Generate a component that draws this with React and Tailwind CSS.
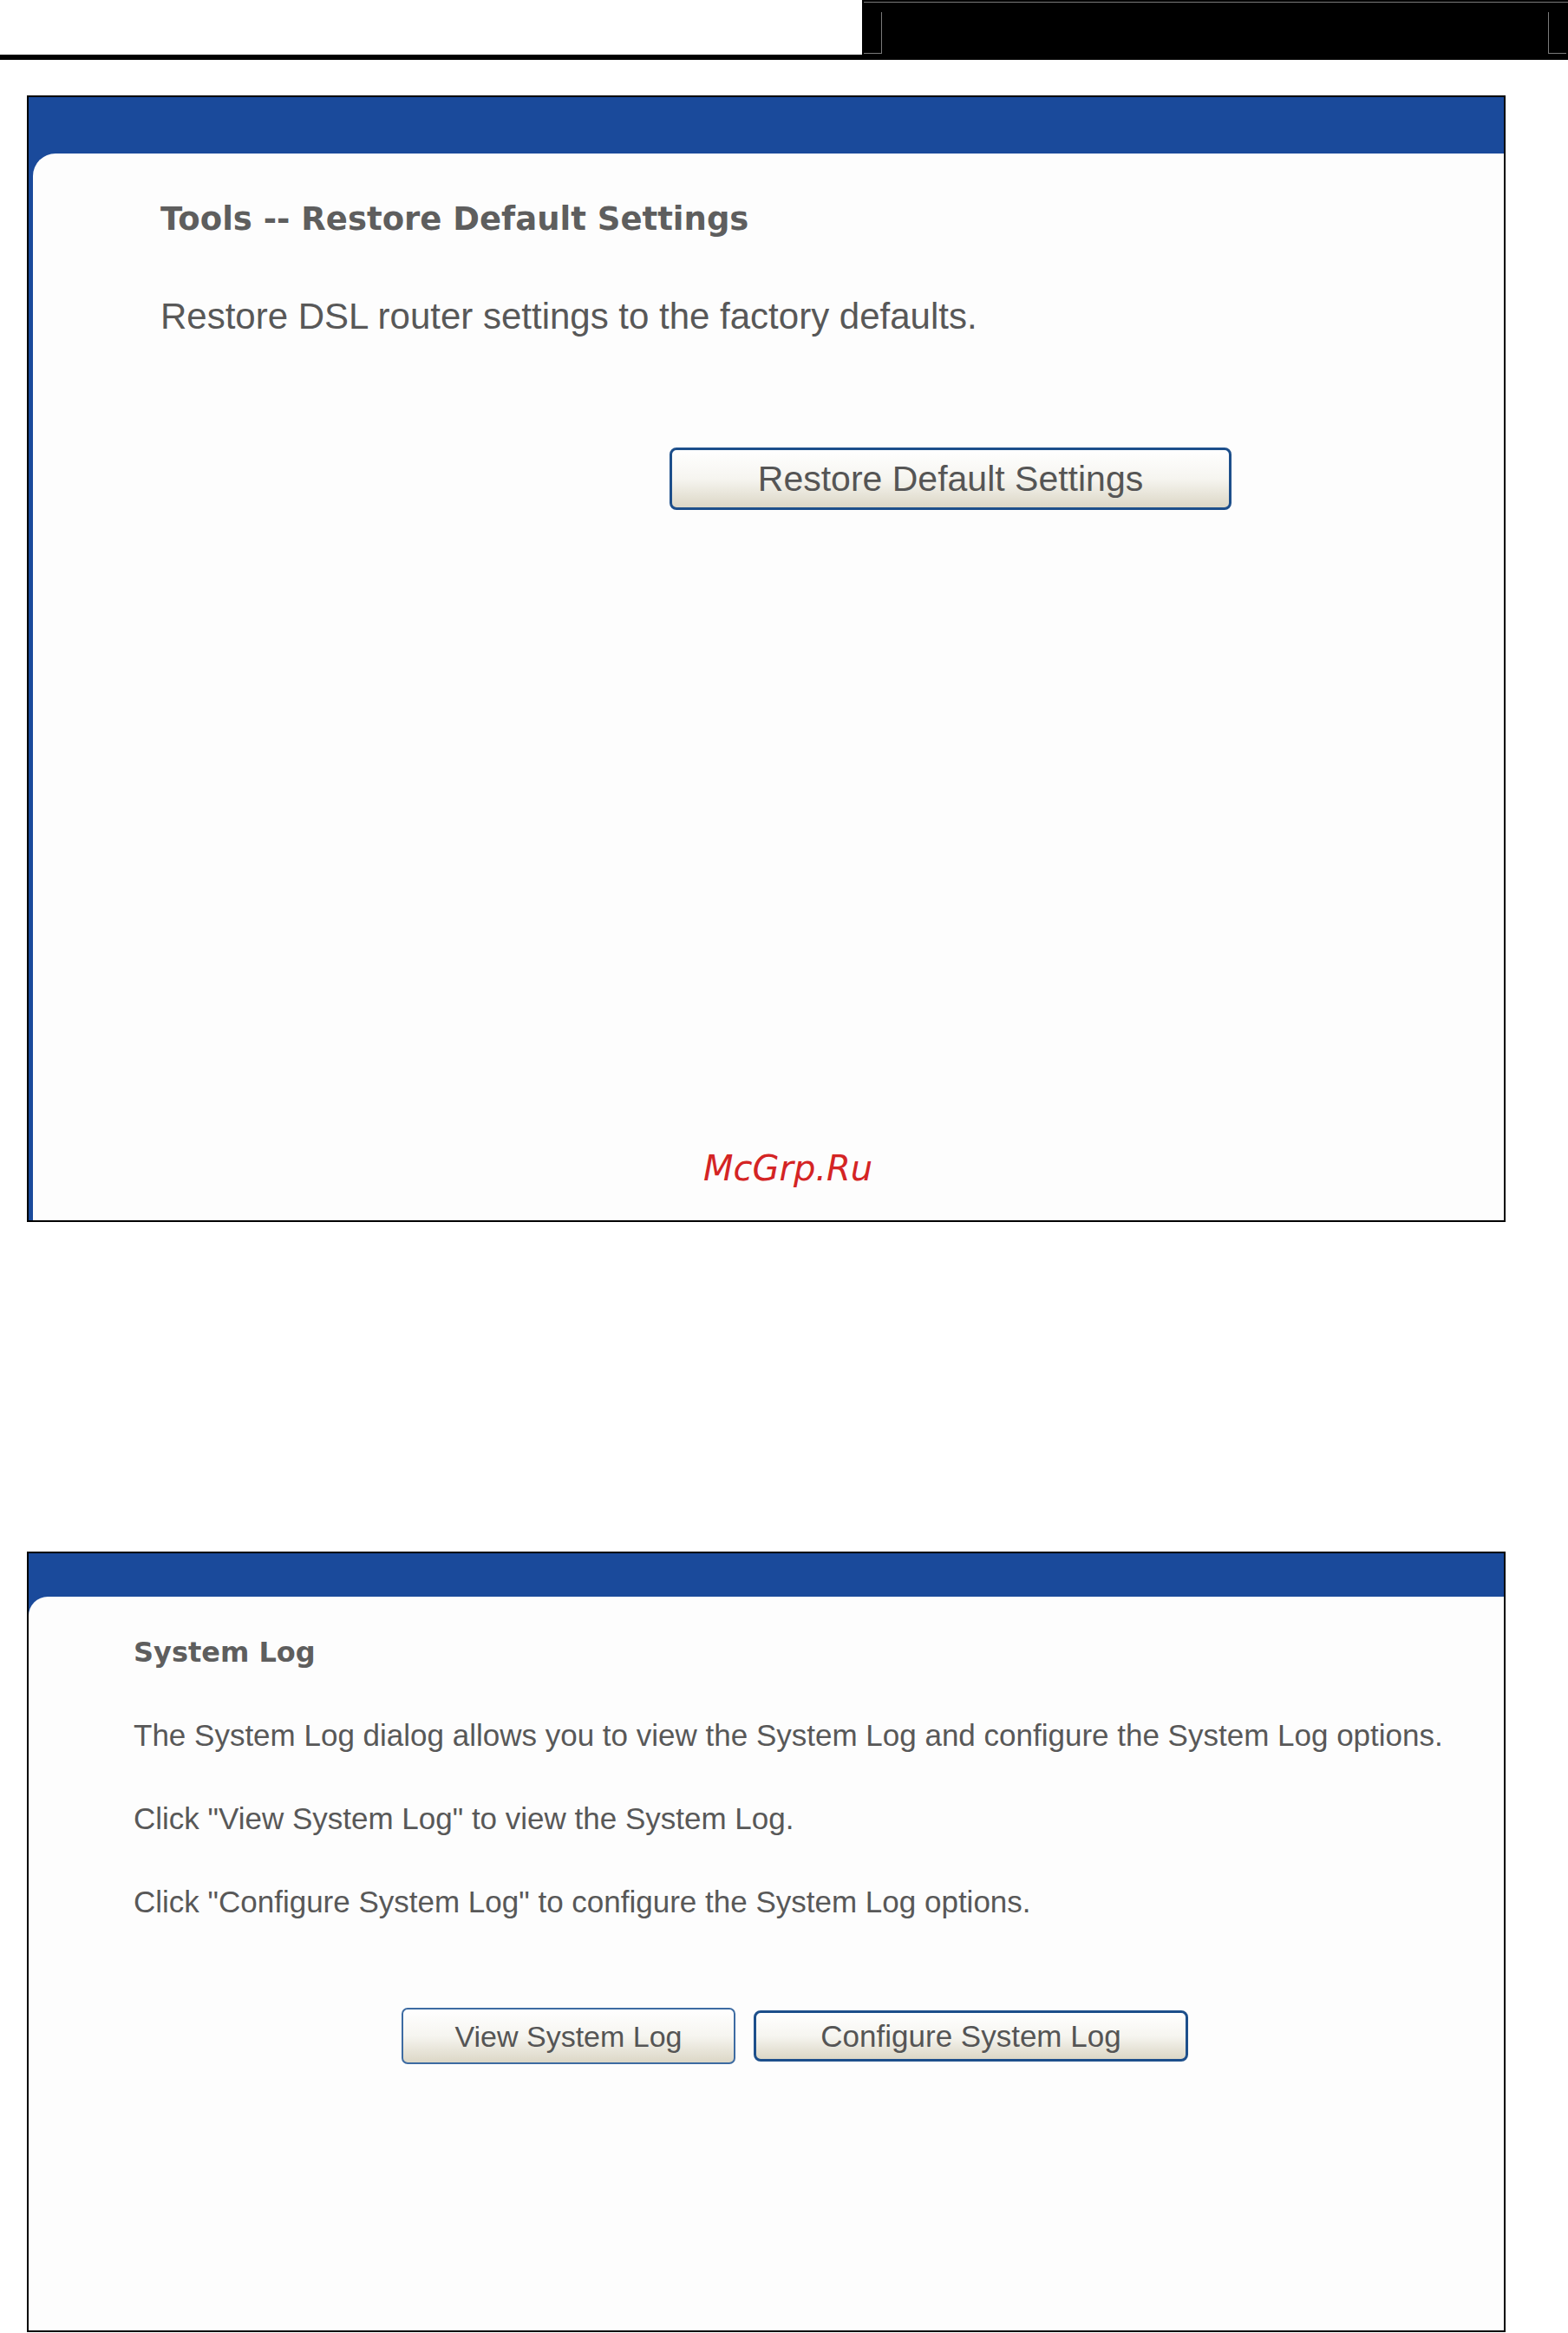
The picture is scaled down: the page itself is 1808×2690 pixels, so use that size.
// Router admin pages: Restore Default Settings and System Log panels
const BLUE = 'bg-[#1a4a9b]'

function PageHeader() {
  return (
    <header>
      <div className="flex h-[63px]">
        <div className="w-[994px] bg-white" />
        <div className="flex-1 bg-black pt-[2px]">
          <div className="h-px ml-[2px] bg-[#7a7a7a]" />
          <div className="flex justify-between mt-[11px] px-[2px]">
            <div className="w-[21px] h-[48px] border-r border-b border-[#7a7a7a]" />
            <div className="w-[21px] h-[48px] border-l border-b border-[#7a7a7a]" />
          </div>
        </div>
      </div>
      <div className="h-[6px] bg-black" />
    </header>
  )
}

function XpButton({ children, strong, className = '' }) {
  return (
    <button
      type="button"
      className={`flex items-center justify-center bg-linear-to-b from-white via-[#f6f5f0] to-[#dcd7c6] text-[#555] leading-none font-['Liberation_Sans',Arial,sans-serif] ${
        strong ? 'border-[3px] border-[#1d4f8b] rounded-[8px]' : 'border-2 border-[#3d6ba2] rounded-[7px]'
      } ${className}`}
    >
      {children}
    </button>
  )
}

export default function App() {
  return (
    <div className="relative w-[1808px] h-[2690px] bg-white overflow-hidden">
      <PageHeader />

      {/* Tools -- Restore Default Settings */}
      <section className={`ml-[31px] mt-[41px] w-[1705px] h-[1299px] border-2 border-black ${BLUE} flex flex-col`}>
        <div className="h-[65px] shrink-0" />
        <div className="flex-1 ml-[5px] rounded-tl-[26px] bg-[#fdfdfd] pl-[147px] pt-[57px]">
          <h2 className="text-[37px] leading-none font-bold text-[#5e5e5e] font-['DejaVu_Sans',Verdana,sans-serif]">
            Tools -- Restore Default Settings
          </h2>
          <p className="mt-[73px] text-[42px] leading-none text-[#585858] font-['Liberation_Sans',Arial,sans-serif]">
            Restore DSL router settings to the factory defaults.
          </p>
          <XpButton strong className="mt-[130px] ml-[587px] w-[648px] h-[72px] text-[41px]">
            Restore Default Settings
          </XpButton>
        </div>
      </section>

      {/* System Log */}
      <section className={`ml-[31px] mt-[380px] w-[1705px] h-[900px] border-2 border-black ${BLUE} flex flex-col`}>
        <div className="h-[50px] shrink-0" />
        <div className="flex-1 rounded-tl-[22px] bg-[#fdfdfd] pl-[121px] pt-[48px] font-['Liberation_Sans',Arial,sans-serif] text-[#585858]">
          <h2 className="text-[32px] leading-none font-bold text-[#5e5e5e] font-['DejaVu_Sans',Verdana,sans-serif]">
            System Log
          </h2>
          <p className="mt-[62px] text-[35px] leading-none">
            The System Log dialog allows you to view the System Log and configure the System Log options.
          </p>
          <p className="mt-[61px] text-[35px] leading-none">Click "View System Log" to view the System Log.</p>
          <p className="mt-[61px] text-[35px] leading-none">
            Click "Configure System Log" to configure the System Log options.
          </p>
          <div className="mt-[105px] ml-[309px] flex items-center gap-[21px] h-[65px]">
            <XpButton className="w-[385px] h-[65px] text-[34px]">View System Log</XpButton>
            <XpButton strong className="w-[501px] h-[59px] text-[35px]">
              Configure System Log
            </XpButton>
          </div>
        </div>
      </section>

      <span className="absolute left-[811px] top-[1327px] text-[40px] leading-none italic text-[#d42424] font-['DejaVu_Sans',Verdana,sans-serif]">
        McGrp.Ru
      </span>
    </div>
  )
}
